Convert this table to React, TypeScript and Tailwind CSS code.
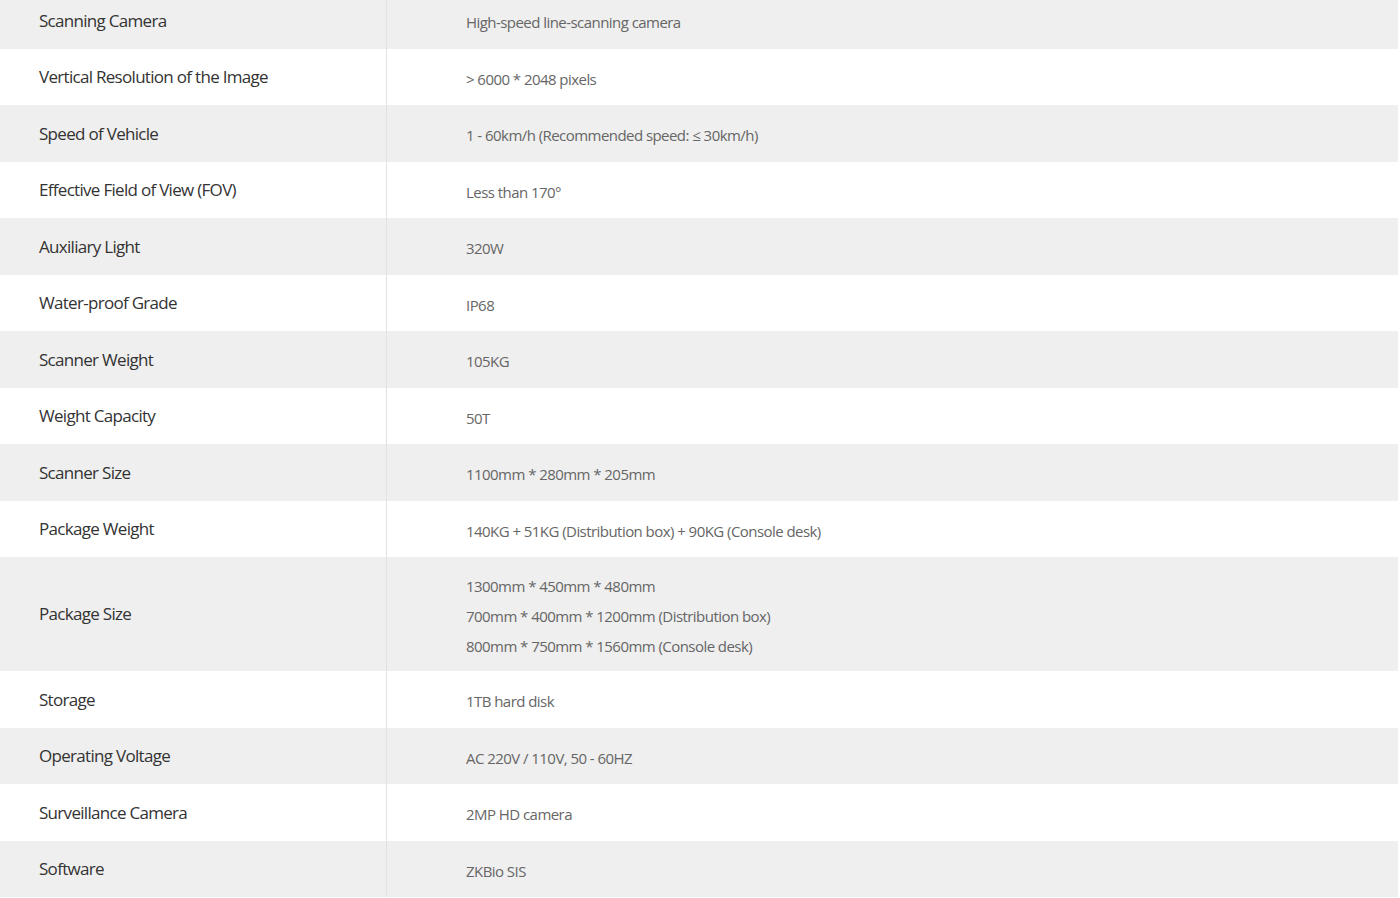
import React from 'react';

type Spec = { label: string; value: string[] };

const specs: Spec[] = [
  { label: 'Scanning Camera', value: ['High-speed line-scanning camera'] },
  { label: 'Vertical Resolution of the Image', value: ['> 6000 * 2048 pixels'] },
  { label: 'Speed of Vehicle', value: ['1 - 60km/h (Recommended speed: ≤ 30km/h)'] },
  { label: 'Effective Field of View (FOV)', value: ['Less than 170°'] },
  { label: 'Auxiliary Light', value: ['320W'] },
  { label: 'Water-proof Grade', value: ['IP68'] },
  { label: 'Scanner Weight', value: ['105KG'] },
  { label: 'Weight Capacity', value: ['50T'] },
  { label: 'Scanner Size', value: ['1100mm * 280mm * 205mm'] },
  { label: 'Package Weight', value: ['140KG + 51KG (Distribution box) + 90KG (Console desk)'] },
  {
    label: 'Package Size',
    value: [
      '1300mm * 450mm * 480mm',
      '700mm * 400mm * 1200mm (Distribution box)',
      '800mm * 750mm * 1560mm (Console desk)',
    ],
  },
  { label: 'Storage', value: ['1TB hard disk'] },
  { label: 'Operating Voltage', value: ['AC 220V / 110V, 50 - 60HZ'] },
  { label: 'Surveillance Camera', value: ['2MP HD camera'] },
  { label: 'Software', value: ['ZKBio SIS'] },
];

export default function App() {
  return (
    <div className="w-[1400px] h-[898px] overflow-hidden bg-white" style={{ fontFamily: '"Open Sans", "Noto Sans", sans-serif' }}>
      <div className="-mt-2 w-[1398px]">
        {specs.map((row, i) => (
          <div
            key={row.label}
            className={
              'flex items-center ' +
              (row.value.length > 1 ? 'h-[114px] ' : 'h-[56.5px] ') +
              (i % 2 === 0 ? 'bg-[#efefef]' : 'bg-white')
            }
          >
            <div className="w-[387px] h-full shrink-0 flex items-center pl-[39px] border-r border-[#e2e2e2] text-[17px] tracking-[-0.7px] text-[#333]">
              {row.label}
            </div>
            <div className="flex-1 pl-[79px] pt-[4px] text-[15px] tracking-[-0.55px] text-[#666] leading-[30px]">
              {row.value.map((v) => (
                <div key={v}>{v}</div>
              ))}
            </div>
          </div>
        ))}
      </div>
    </div>
  );
}
